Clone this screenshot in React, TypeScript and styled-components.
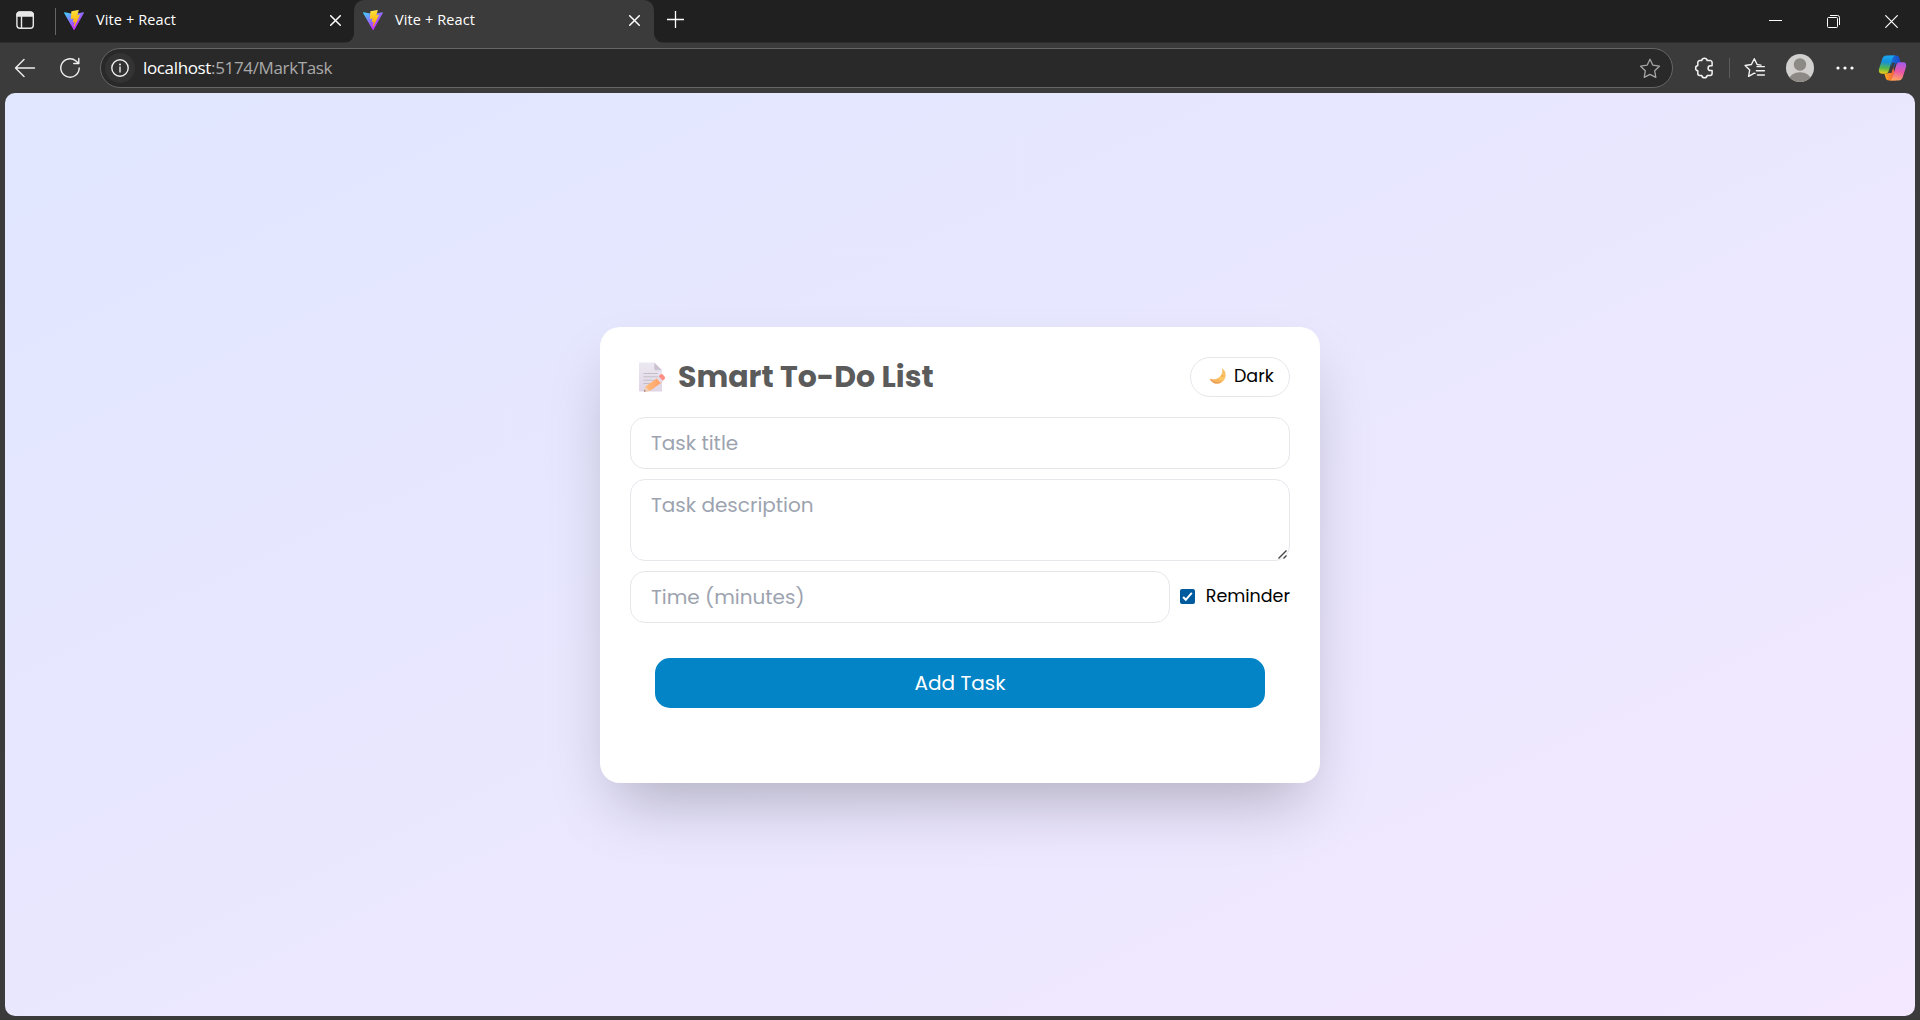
import React from 'react';
import styled, { createGlobalStyle } from 'styled-components';

const ui = `"Segoe UI", "Open Sans", "Noto Sans", sans-serif`;
const poppins = `Poppins, Inter, "Liberation Sans", sans-serif`;

const GlobalStyle = createGlobalStyle`
  *, *::before, *::after { box-sizing: border-box; }
  html, body { margin: 0; padding: 0; background: #3b3b3b; }
  svg { display: block; flex: none; }
`;

const Window = styled.div`
  display: flex;
  flex-direction: column;
  width: 1920px;
  height: 1020px;
  overflow: hidden;
  background: #3b3b3b;
  font-family: ${ui};
`;

const TabStrip = styled.div`
  display: flex;
  height: 43px;
  flex: none;
  background: linear-gradient(#202020 42px, #2d2d2d 42px);
  color: #fff;
`;

const TabMenu = styled.div`
  display: flex;
  align-items: center;
  width: 56px;
  height: 42px;
  padding: 0 0 2px 15px;
  border-right: 1px solid transparent;
  border-image: linear-gradient(transparent 9px, #666 9px, #666 34px, transparent 34px) 1;
`;

const Tab = styled.div<{ $active?: boolean; $width: number }>`
  position: relative;
  display: flex;
  align-items: center;
  width: ${(p) => p.$width}px;
  height: 43px;
  padding: ${(p) => (p.$active ? '0 14px 3px 9px' : '0 13px 3px 8px')};
  border-radius: 10px 10px 0 0;
  background: ${(p) => (p.$active ? '#3b3b3b' : 'transparent')};
  ${(p) =>
    p.$active &&
    `
    &::before, &::after {
      content: '';
      position: absolute;
      bottom: 0;
      width: 10px;
      height: 10px;
    }
    &::before { left: -10px; background: radial-gradient(circle at 0 0, transparent 9.5px, #3b3b3b 10.5px); }
    &::after { right: -10px; background: radial-gradient(circle at 100% 0, transparent 9.5px, #3b3b3b 10.5px); }
  `}
`;

const TabTitle = styled.span`
  flex: 1;
  margin-left: 12px;
  font-size: 14.5px;
  line-height: 20px;
  letter-spacing: 0.12px;
  white-space: nowrap;
`;

const NewTab = styled.div`
  display: flex;
  align-items: center;
  padding: 0 0 4px 13px;
`;

const WindowControls = styled.div`
  display: flex;
  align-items: center;
  gap: 45px;
  margin-left: auto;
  padding-right: 22px;
`;

const Toolbar = styled.div`
  display: flex;
  align-items: center;
  height: 50px;
  flex: none;
  padding: 0 7px 0 14px;
`;

const NavIcons = styled.div`
  display: flex;
  align-items: center;
  gap: 23px;
  width: 86px;
`;

const AddressBar = styled.div`
  display: flex;
  align-items: center;
  flex: none;
  width: 1573px;
  height: 40px;
  padding: 0 11px 0 4px;
  border: 1px solid #666;
  border-radius: 20px;
  background: #292929;
`;

const SiteInfo = styled.div`
  display: grid;
  place-items: center;
  width: 30px;
  height: 30px;
  border-radius: 50%;
  background: #333;
`;

const Url = styled.div`
  flex: 1;
  margin-left: 8px;
  padding-bottom: 1px;
  color: #a9a9a9;
  font-size: 17px;
  line-height: 24px;
  letter-spacing: -0.35px;
`;

const Host = styled.span`
  color: #fff;
`;

const Actions = styled.div`
  display: grid;
  grid-template-columns: 35px 15px 42px 50px 42px 29px;
  align-items: center;
  padding-left: 21px;
`;

const Divider = styled.span`
  width: 1px;
  height: 20px;
  background: #5c5c5c;
`;

const Page = styled.main`
  display: flex;
  align-items: center;
  justify-content: center;
  width: 1910px;
  height: 923px;
  margin-left: 5px;
  padding-top: 1px;
  border-radius: 10px;
  overflow: hidden;
  background: linear-gradient(to bottom right, #e0e7ff, #f3e8ff);
  font-family: ${poppins};
  font-feature-settings: 'cv11';
`;

const Card = styled.section`
  display: flex;
  flex-direction: column;
  width: 720px;
  height: 456px;
  padding: 30px;
  border-radius: 20px;
  background: #fff;
  box-shadow: 0 31.25px 62.5px -15px rgba(0, 0, 0, 0.25);
`;

const CardHeader = styled.header`
  display: flex;
  align-items: center;
  justify-content: space-between;
  height: 40px;
  margin-bottom: 20px;
`;

const Title = styled.h1`
  display: flex;
  align-items: center;
  gap: 12px;
  margin: 0;
  padding-left: 8px;
  color: #5b5b5b;
  font-size: 30px;
  line-height: 40px;
  font-weight: 700;
  white-space: nowrap;
`;

const ThemeButton = styled.button`
  display: flex;
  align-items: center;
  gap: 7px;
  width: 100px;
  height: 40px;
  padding: 0 0 2px 18px;
  border: 1px solid #e5e7eb;
  border-radius: 20px;
  background: #fff;
  color: #000;
  font-family: inherit;
  font-feature-settings: inherit;
  font-size: 17.5px;
`;

const Fields = styled.div`
  display: flex;
  flex-direction: column;
  gap: 10px;
`;

const Field = styled.input`
  flex: 1 0 52px;
  min-width: 0;
  height: 52px;
  padding: 0 20px;
  border: 1px solid #e5e7eb;
  border-radius: 15px;
  background: #fff;
  font-family: inherit;
  font-feature-settings: inherit;
  font-size: 20px;
  outline: none;
  &::placeholder { color: #9ca3af; opacity: 1; }
`;

const DescriptionBox = styled.div`
  position: relative;
  display: flex;
  height: 82px;
`;

const Description = styled.textarea`
  flex: 1;
  padding: 10px 20px;
  border: 1px solid #e5e7eb;
  border-radius: 15px;
  background: #fff;
  font-family: inherit;
  font-feature-settings: inherit;
  font-size: 20px;
  line-height: 30px;
  resize: none;
  outline: none;
  &::placeholder { color: #9ca3af; opacity: 1; }
`;

const Grip = styled.svg`
  position: absolute;
  right: 3px;
  bottom: 2px;
`;

const TimeRow = styled.div`
  display: flex;
  gap: 10px;
`;

const Reminder = styled.label`
  display: flex;
  align-items: center;
  justify-content: space-between;
  width: 110px;
  padding-bottom: 2px;
  color: #000;
  font-size: 17.5px;
  white-space: nowrap;
`;

const AddButton = styled.button`
  height: 50px;
  margin: 35px 25px 0;
  padding: 0;
  border: 0;
  border-radius: 15px;
  background: #0284c7;
  color: #fff;
  font-family: inherit;
  font-feature-settings: inherit;
  font-size: 20px;
  font-weight: 400;
`;

const ViteLogo = ({ id }: { id: string }) => (
  <svg width="20" height="20" viewBox="0 0 256 257">
    <defs>
      <linearGradient id={`${id}a`} x1="-.8%" x2="57.6%" y1="7.7%" y2="78.4%">
        <stop offset="0" stopColor="#41D1FF" />
        <stop offset="1" stopColor="#BD34FE" />
      </linearGradient>
      <linearGradient id={`${id}b`} x1="43.4%" x2="50.3%" y1="2.2%" y2="89%">
        <stop offset="0" stopColor="#FFEA83" />
        <stop offset=".083" stopColor="#FFDD35" />
        <stop offset="1" stopColor="#FFA800" />
      </linearGradient>
    </defs>
    <path fill={`url(#${id}a)`} d="M255.153 37.938 134.897 252.976c-2.483 4.44-8.862 4.466-11.382.048L.875 37.958c-2.746-4.814 1.371-10.646 6.827-9.67l120.385 21.517a6.537 6.537 0 0 0 2.322-.004l117.867-21.483c5.438-.991 9.574 4.796 6.877 9.62Z" />
    <path fill={`url(#${id}b)`} d="M185.432.063 96.44 17.501a3.268 3.268 0 0 0-2.634 3.014l-5.474 92.456a3.268 3.268 0 0 0 3.997 3.378l24.777-5.718c2.318-.535 4.413 1.507 3.936 3.838l-7.361 36.047c-.495 2.426 1.782 4.5 4.151 3.78l15.304-4.649c2.372-.72 4.652 1.36 4.15 3.788l-11.698 56.621c-.732 3.542 3.979 5.473 5.943 2.437l1.313-2.028 72.516-144.72c1.215-2.423-.88-5.186-3.54-4.672l-25.505 4.922c-2.396.462-4.435-1.77-3.759-4.114l16.646-57.705c.677-2.35-1.37-4.583-3.769-4.113Z" />
  </svg>
);

const CloseIcon = ({ size = 11, width = 1.5 }: { size?: number; width?: number }) => (
  <svg width={size} height={size} viewBox={`0 0 ${size} ${size}`} stroke="#fff" strokeWidth={width} strokeLinecap="round">
    <path d={`M.7.7 ${size - 0.7} ${size - 0.7}M${size - 0.7}.7.7 ${size - 0.7}`} />
  </svg>
);

const TabActionsIcon = () => (
  <svg width="20" height="20" viewBox="0 0 20 20" fill="none" stroke="#e8e8e8" strokeWidth="1.4">
    <rect x="1.9" y="2.2" width="16.4" height="16" rx="3" />
    <path d="M2 5V4.8C2 3 3 2 4.8 2h10.4C17 2 18.2 3 18.2 4.8V6H2z" fill="#e8e8e8" />
    <path d="M6.5 6v12" />
  </svg>
);

const BackIcon = () => (
  <svg width="22" height="20" viewBox="0 0 22 20" fill="none" stroke="#f0f0f0" strokeWidth="1.4" strokeLinecap="round" strokeLinejoin="round">
    <path d="M10 1.5 1.5 10l8.5 8.5M1.7 10h18.8" />
  </svg>
);

const ReloadIcon = () => (
  <svg width="22" height="22" viewBox="0 0 22 22" fill="none" stroke="#f0f0f0" strokeWidth="1.4" strokeLinecap="round" strokeLinejoin="round">
    <path d="M20.2 11A9.2 9.2 0 1 1 17 4l2.8 2.5M19.8 1.5v5h-5" />
  </svg>
);

const InfoIcon = () => (
  <svg width="20" height="20" viewBox="0 0 20 20" fill="none" stroke="#eee" strokeWidth="1.4">
    <circle cx="10" cy="10" r="8.2" />
    <path d="M10 9v5" strokeLinecap="round" />
    <circle cx="10" cy="6.4" r="1" fill="#eee" stroke="none" />
  </svg>
);

const StarIcon = () => (
  <svg width="22" height="21" viewBox="0 0 22 21" fill="none" stroke="#a5a5a5" strokeWidth="1.3" strokeLinejoin="round">
    <path d="M11 1.3 13.9 7.2 20.4 8.2 15.7 12.8 16.8 19.3 11 16.3 5.2 19.3 6.3 12.8 1.6 8.2 8.1 7.2Z" />
  </svg>
);

const PuzzleIcon = () => (
  <svg width="20" height="22" viewBox="0 0 20 22" fill="none" stroke="#f2f2f2" strokeWidth="1.5" strokeLinejoin="round">
    <path d="M7.7 3.6a2.8 2.8 0 0 1 5.5 0h3a1.9 1.9 0 0 1 1.9 1.9v3.3h-1.6a2.4 2.4 0 0 0 0 4.8h1.6v3a1.9 1.9 0 0 1-1.9 1.9h-3a2.8 2.8 0 0 1-5.5 0h-2a1.9 1.9 0 0 1-1.9-1.9v-2.8a2.7 2.7 0 0 1 0-5.3V5.5a1.9 1.9 0 0 1 1.9-1.9z" />
  </svg>
);

const FavoritesIcon = () => (
  <svg width="22" height="22" viewBox="0 0 22 22" fill="none" stroke="#f2f2f2" strokeWidth="1.4" strokeLinejoin="round" strokeLinecap="round">
    <path d="M11 16.3 10.3 16.1 4.6 19.3l1.1-6.3L1.1 8.500l6.300-1L10.300 1.700l2.800 5.800 3.900.6M13 9.600h7.400M12.400 13.800h8M13.400 18h7" />
  </svg>
);

const Avatar = () => (
  <svg width="28" height="28" viewBox="0 0 28 28">
    <defs>
      <clipPath id="avatarClip"><circle cx="14" cy="14" r="14" /></clipPath>
    </defs>
    <g clipPath="url(#avatarClip)">
      <rect width="28" height="28" fill="#d2d0ce" />
      <circle cx="14" cy="10.5" r="6.2" fill="#8d8985" />
      <ellipse cx="14" cy="26" rx="11" ry="7.8" fill="#8d8985" />
    </g>
  </svg>
);

const MoreIcon = () => (
  <svg width="18" height="4" viewBox="0 0 18 4" fill="#fff">
    <circle cx="2" cy="2" r="1.6" /><circle cx="9" cy="2" r="1.6" /><circle cx="16" cy="2" r="1.6" />
  </svg>
);

const CopilotIcon = () => (
  <svg width="29" height="28" viewBox="0 0 29 28">
    <defs>
      <linearGradient id="cpL" x1="0.4" x2="0.3" y1="0" y2="1">
        <stop offset="0" stopColor="#1aa7ef" /><stop offset=".35" stopColor="#1690d8" />
        <stop offset=".7" stopColor="#58b947" /><stop offset="1" stopColor="#f4cf16" />
      </linearGradient>
      <linearGradient id="cpR" x1=".6" x2=".4" y1="0" y2="1">
        <stop offset="0" stopColor="#a65be8" /><stop offset=".5" stopColor="#e957a8" />
        <stop offset="1" stopColor="#ffa65c" />
      </linearGradient>
      <linearGradient id="cpT" x1="0" x2="1"><stop offset="0" stopColor="#1578d8" /><stop offset="1" stopColor="#1d45c8" /></linearGradient>
      <linearGradient id="cpB" x1="0" x2="1"><stop offset="0" stopColor="#ffb01f" /><stop offset="1" stopColor="#ee5142" /></linearGradient>
    </defs>
    <path d="M11 1.5h7c2 0 2.9 1 3.4 2.7L22.8 9H20c-2 0-3 1-3.7 3L14 16z" fill="url(#cpT)" />
    <path d="M18 26.5h-7c-2 0-2.9-1-3.4-2.7L6.4 19.5H9c2 0 3-1 3.7-3L15 12z" fill="url(#cpB)" />
    <path d="M8.5 1.5h9c-1.8.4-2.6 1.7-3.2 3.7l-3.5 11.6c-.6 2-1.5 3-3.6 3H4c-2.800 0-3.700-2-3-4.700L4.200 5c.7-2.200 2-3.500 4.300-3.500z" fill="url(#cpL)" />
    <path d="M20.5 26.500h-9c1.800-.4 2.600-1.700 3.200-3.700l3.500-11.600c.6-2 1.500-3 3.600-3H25c2.800 0 3.700 2 3 4.700L24.800 23c-.7 2.200-2 3.500-4.300 3.500z" fill="url(#cpR)" />
    <path d="M14 8.800h3.600c-1 .6-1.400 1.500-1.800 2.700l-2.300 7.400H10.800c.8-.5 1.100-1.400 1.400-2.400z" fill="#3b3b3b" />
  </svg>
);

const MemoIcon = () => (
  <svg width="28" height="30" viewBox="0 0 28 30">
    <defs>
      <linearGradient id="paper" x2="0" y2="1"><stop offset="0" stopColor="#ece9f1" /><stop offset="1" stopColor="#dfd5e6" /></linearGradient>
      <linearGradient id="pencil"><stop offset="0" stopColor="#ffc07c" /><stop offset="1" stopColor="#ff9e68" /></linearGradient>
    </defs>
    <path d="M1 .5h15l8 8v21H1.800A.8.8 0 0 1 1 28.700z" fill="url(#paper)" />
    <path d="M16.300.5 24 8.300h-6.200a1.500 1.500 0 0 1-1.500-1.500z" fill="#cbc3d1" />
    <path d="M5.500 11.500h14.300M5.500 14.800h14.300M5.500 18.200h12M5.500 21.500h8" stroke="#c3bec8" strokeWidth="1.1" />
    <path d="m20 15.500 4.200 4.700-12.500 8.700-5.700.7 1.700-5.300z" fill="url(#pencil)" />
    <path d="m7.700 24.300 4 4.600L6 29.600z" fill="#efcdb5" />
    <path d="m6.500 27.700 1.300 1.600-1.800.3z" fill="#665c68" />
    <path d="m18.600 16.300 2.600-2 4 4.700-2.500 2z" fill="#e4dced" />
    <path d="m20.600 14.200 2-1.700a1.600 1.600 0 0 1 2.200.1l1.900 2.200a1.600 1.600 0 0 1-.1 2.200l-1.900 1.700z" fill="#ff8f83" />
  </svg>
);

const MoonIcon = () => (
  <svg width="18" height="18" viewBox="0 0 18 18">
    <defs><linearGradient id="moon" x1="0" y1="1" x2="1" y2="0"><stop offset="0" stopColor="#f1a05c" /><stop offset=".5" stopColor="#ffc866" /><stop offset="1" stopColor="#f4bd68" /></linearGradient></defs>
    <path d="M13 1.100c5.800 4 4.500 13-2.400 15.300C6.300 17.800 2 15.500.8 11.500c3 1.200 6.500 1 9-1C13 8.100 13.900 4.500 13 1.100z" fill="url(#moon)" />
    <path d="M2 12.700c2.500 4 8.600 4 11 .7" fill="none" stroke="#d57b48" strokeWidth=".5" />
    <circle cx="13.5" cy="9" r="1" fill="#efa954" /><circle cx="9" cy="13.3" r=".9" fill="#efaa55" />
  </svg>
);

const CheckIcon = () => (
  <svg width="15" height="15" viewBox="0 0 15 15">
    <rect width="15" height="15" rx="2" fill="#005a9e" />
    <path d="m3.100 8 2.700 2.800 6-7" fill="none" stroke="#fff" strokeWidth="2" />
  </svg>
);

export default function App() {
  return (
    <>
      <GlobalStyle />
      <Window>
        <TabStrip>
          <TabMenu><TabActionsIcon /></TabMenu>
          <Tab $width={298}>
            <ViteLogo id="first" /><TabTitle>Vite + React</TabTitle><CloseIcon />
          </Tab>
          <Tab $active $width={300}>
            <ViteLogo id="second" /><TabTitle>Vite + React</TabTitle><CloseIcon />
          </Tab>
          <NewTab>
            <svg width="17" height="17" viewBox="0 0 17 17" stroke="#fff" strokeWidth="1.3"><path d="M8.5 0v17M0 8.5h17" /></svg>
          </NewTab>
          <WindowControls>
            <svg width="13" height="13" viewBox="0 0 13 13" stroke="#fff"><path d="M0 5.5h13" /></svg>
            <svg width="13" height="13" viewBox="0 0 13 13" fill="none" stroke="#fff"><rect x=".5" y="2.5" width="10" height="10" rx="1" /><path d="M3 .5h7.5a2 2 0 0 1 2 2V10" /></svg>
            <CloseIcon size={13} width={1.2} />
          </WindowControls>
        </TabStrip>
        <Toolbar>
          <NavIcons><BackIcon /><ReloadIcon /></NavIcons>
          <AddressBar>
            <SiteInfo><InfoIcon /></SiteInfo>
            <Url><Host>localhost</Host>:5174/MarkTask</Url>
            <StarIcon />
          </AddressBar>
          <Actions>
            <PuzzleIcon /><Divider /><FavoritesIcon /><Avatar /><MoreIcon /><CopilotIcon />
          </Actions>
        </Toolbar>
        <Page>
          <Card>
            <CardHeader>
              <Title><MemoIcon />Smart To-Do List</Title>
              <ThemeButton><MoonIcon />Dark</ThemeButton>
            </CardHeader>
            <Fields>
              <Field placeholder="Task title" />
              <DescriptionBox>
                <Description placeholder="Task description" />
                <Grip width="9" height="9" viewBox="0 0 9 9" stroke="#444" strokeWidth="1.4"><path d="M.5 8.5 8.5.5M5.5 8.5l3-3" /></Grip>
              </DescriptionBox>
              <TimeRow>
                <Field placeholder="Time (minutes)" />
                <Reminder><CheckIcon />Reminder</Reminder>
              </TimeRow>
            </Fields>
            <AddButton>Add Task</AddButton>
          </Card>
        </Page>
      </Window>
    </>
  );
}
